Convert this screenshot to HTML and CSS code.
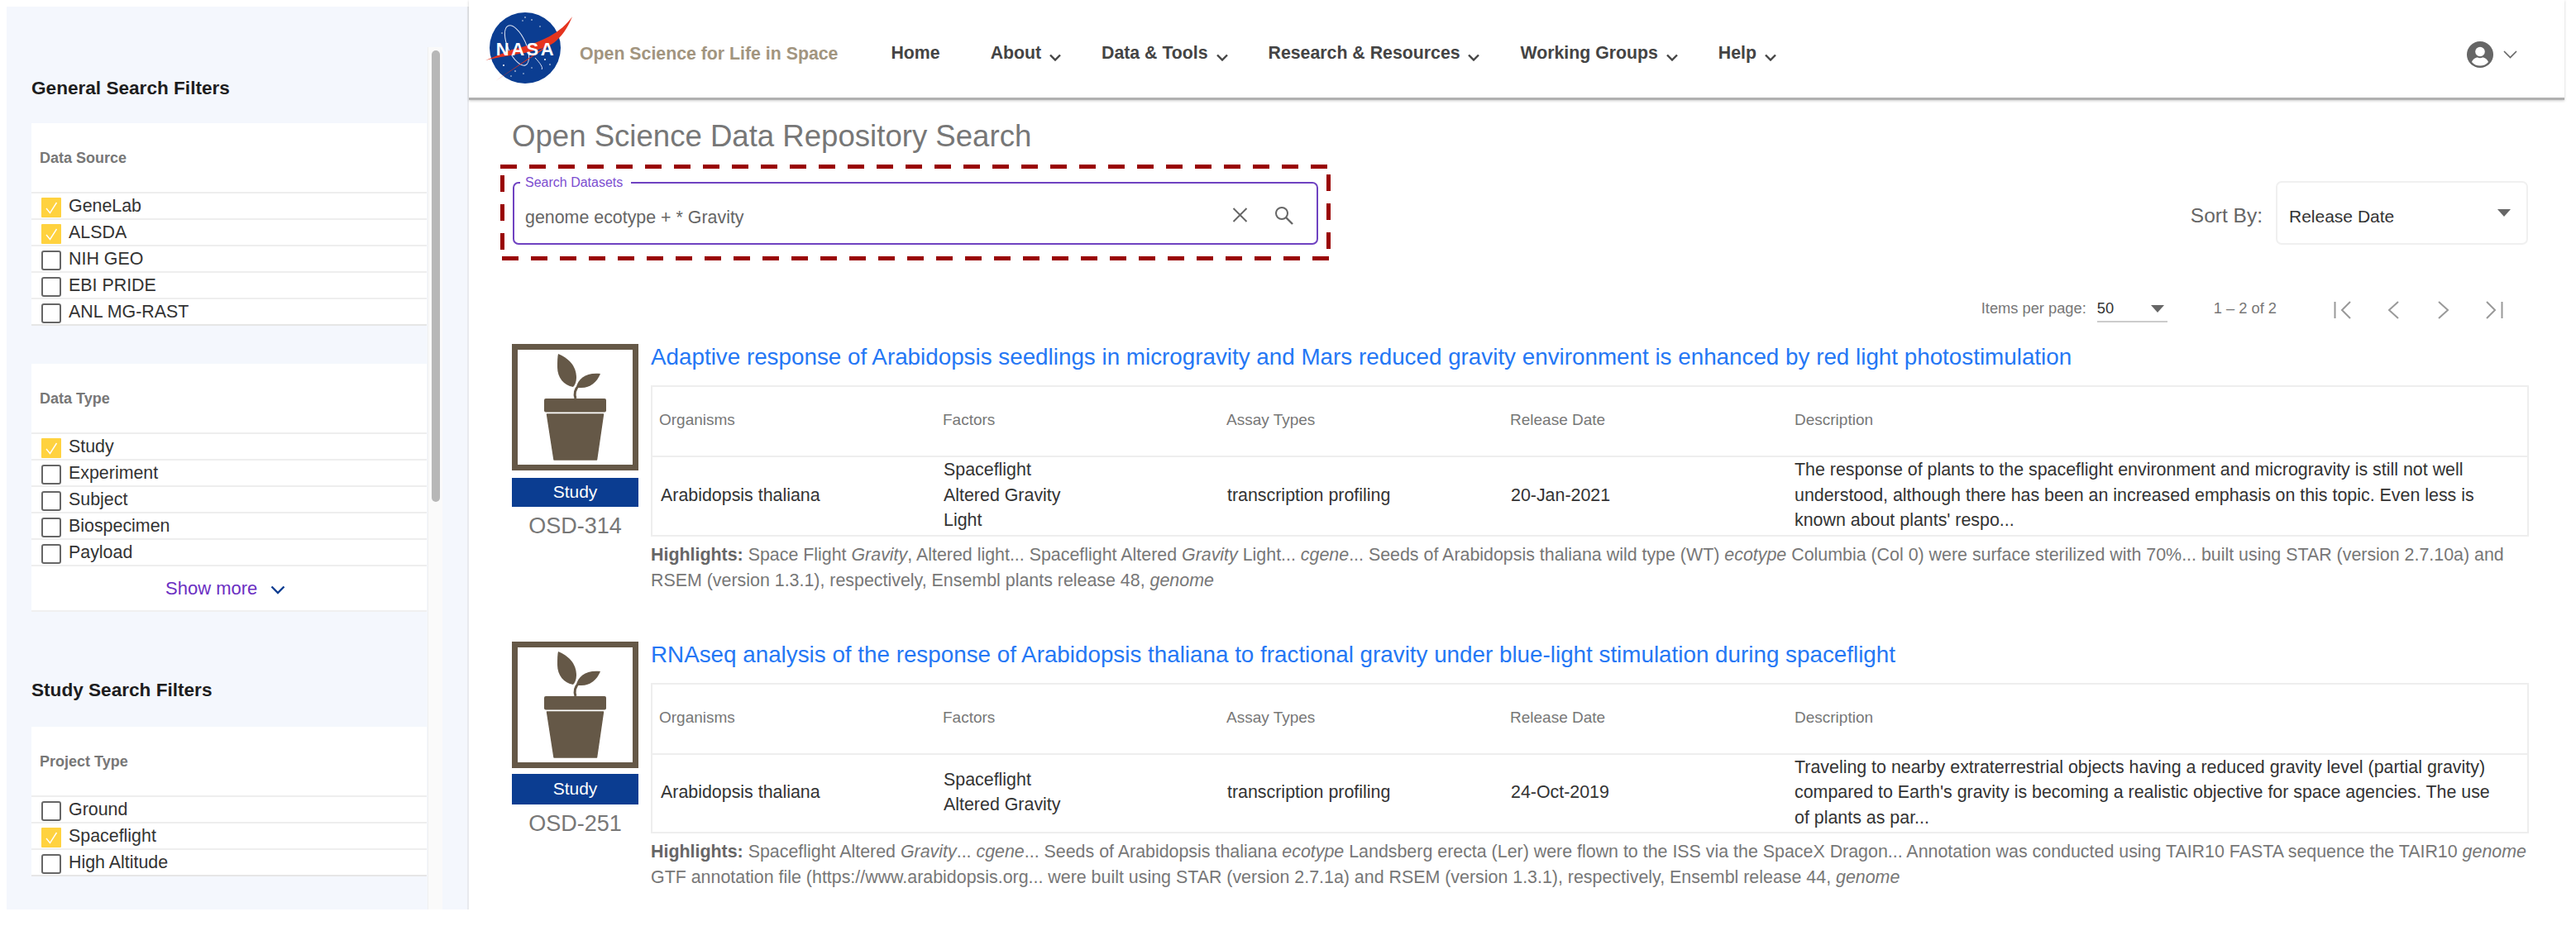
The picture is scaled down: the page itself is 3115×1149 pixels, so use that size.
FILE: index.html
```html
<!DOCTYPE html>
<html lang="en">
<head>
    <meta charset="UTF-8">
    <title>Open Science Data Repository Search</title>
    <link rel="stylesheet" href="styles.css">
</head>
<body>
    <svg class="defs" width="0" height="0">
        <symbol id="plant" viewBox="0 0 153 153">
            <rect x="3.5" y="3.5" width="146" height="146" fill="#fff" stroke="#655847" stroke-width="7"/>
            <rect x="39" y="66" width="75" height="16.5" rx="2" fill="#655847"/>
            <path d="M42.5 85H110.5L102.5 140H51Z" fill="#655847" stroke="#655847" stroke-linejoin="round" stroke-width="1.5"/>
            <path d="M56 12C68 17 78 26 78 41C78 46 76 50 74 52C63 50 55 41 55 28C55 21 55 16 56 12Z" fill="#655847"/>
            <path d="M107 36C103 46 95 53 84 53C82 53 80 53 78 52C80 42 90 34 107 36Z" fill="#655847"/>
            <path d="M77 66C75 60 76 55 81 50" fill="none" stroke="#655847" stroke-width="3"/>
        </symbol>
        <symbol id="tick" viewBox="0 0 24 24">
            <path d="M6 13L10.5 18.5L18.5 6" fill="none" stroke="#fff" stroke-width="1.4"/>
        </symbol>
        <symbol id="caret" viewBox="0 0 14 9">
            <path d="M1 1.5L7 7.5L13 1.5" fill="none" stroke="#444" stroke-width="2.4"/>
        </symbol>
    </svg>

    <!-- Filters -->
    <aside class="sidebar">
        <div class="filters">
            <h3 class="filter-title">General Search Filters</h3>
            <section class="filter-card">
                <h4>Data Source</h4>
                <div class="row"><span class="box on"><svg><use href="#tick"/></svg></span>GeneLab</div>
                <div class="row"><span class="box on"><svg><use href="#tick"/></svg></span>ALSDA</div>
                <div class="row"><span class="box"></span>NIH GEO</div>
                <div class="row"><span class="box"></span>EBI PRIDE</div>
                <div class="row"><span class="box"></span>ANL MG-RAST</div>
            </section>
            <section class="filter-card second">
                <h4>Data Type</h4>
                <div class="row"><span class="box on"><svg><use href="#tick"/></svg></span>Study</div>
                <div class="row"><span class="box"></span>Experiment</div>
                <div class="row"><span class="box"></span>Subject</div>
                <div class="row"><span class="box"></span>Biospecimen</div>
                <div class="row"><span class="box"></span>Payload</div>
                <div class="show-more">Show more
                    <svg width="18" height="11" viewBox="0 0 18 11"><path d="M1.5 1.5L9 9L16.5 1.5" fill="none" stroke="#0b3d91" stroke-width="2.4"/></svg>
                </div>
            </section>
            <h3 class="filter-title study">Study Search Filters</h3>
            <section class="filter-card">
                <h4>Project Type</h4>
                <div class="row"><span class="box"></span>Ground</div>
                <div class="row"><span class="box on"><svg><use href="#tick"/></svg></span>Spaceflight</div>
                <div class="row"><span class="box"></span>High Altitude</div>
            </section>
        </div>
        <div class="scroll-track"><div class="scroll-thumb"></div></div>
    </aside>

    <main class="main">
        <!-- Top navigation -->
        <header class="topbar">
            <svg class="nasa" width="110" height="95" viewBox="0 0 110 95">
                <circle cx="50" cy="48" r="43" fill="#0b3d91"/>
                <ellipse cx="40" cy="45" rx="11" ry="26" transform="rotate(-24 40 45)" fill="none" stroke="#dfe6f5" stroke-width="1"/>
                <path d="M62 60C68 66 72 72 70 74" fill="none" stroke="#dfe6f5" stroke-width="1"/>
                <g fill="#fff">
                    <circle cx="50" cy="11" r=".8"/><circle cx="58" cy="14" r=".8"/><circle cx="47" cy="15" r=".7"/>
                    <circle cx="22" cy="30" r=".7"/><circle cx="68" cy="22" r=".7"/><circle cx="24" cy="69" r="1"/>
                    <circle cx="38" cy="76" r=".8"/><circle cx="48" cy="79" r=".7"/><circle cx="74" cy="62" r="1"/>
                    <circle cx="80" cy="68" r=".8"/><circle cx="58" cy="72" r=".7"/><circle cx="33" cy="82" r=".7"/>
                </g>
                <path d="M107 10C94 29 70 42 34 50L2 63C34 55 72 54 88 39C97 31 103 20 107 10Z" fill="#e5341f"/>
                <path d="M84 40L14 88L78 46Z" fill="#e5341f"/>
                <text class="nasa-word" x="51" y="57" text-anchor="middle">NASA</text>
            </svg>
            <span class="tagline">Open Science for Life in Space</span>
            <nav class="nav">
                <a class="home">Home</a>
                <a>About <svg class="caret"><use href="#caret"/></svg></a>
                <a>Data &amp; Tools <svg class="caret"><use href="#caret"/></svg></a>
                <a>Research &amp; Resources <svg class="caret"><use href="#caret"/></svg></a>
                <a>Working Groups <svg class="caret"><use href="#caret"/></svg></a>
                <a>Help <svg class="caret"><use href="#caret"/></svg></a>
            </nav>
            <div class="user">
                <svg width="32" height="32" viewBox="0 0 32 32">
                    <circle cx="16" cy="16" r="16" fill="#666"/>
                    <circle cx="16" cy="12.5" r="5.8" fill="#fff"/>
                    <path d="M6 25C7.5 21 11 19.5 13 19.5C15 20.5 17 20.5 19 19.5C21 19.5 24.5 21 26 25C23.5 28 20 29.5 16 29.5C12 29.5 8.500 28 6 25Z" fill="#fff"/>
                </svg>
                <svg width="17" height="10" viewBox="0 0 17 10"><path d="M1 1L8.500 8.500L16 1" fill="none" stroke="#666" stroke-width="1.6"/></svg>
            </div>
        </header>

        <div class="content">
            <h1 class="page-title">Open Science Data Repository Search</h1>

            <div class="toolbar">
                <div class="highlight">
                    <div class="search-field">
                        <span class="search-label">Search Datasets</span>
                        <span class="search-text">genome ecotype + * Gravity</span>
                        <div class="search-icons">
                            <svg width="19" height="18" viewBox="0 0 19 18"><path d="M1.500 1L17.500 17M17.500 1L1.500 17" fill="none" stroke="#666" stroke-width="2"/></svg>
                            <svg width="23" height="23" viewBox="0 0 23 23"><circle cx="9" cy="9" r="7" fill="none" stroke="#666" stroke-width="2"/><path d="M14 14L22 22" stroke="#666" stroke-width="2.400"/></svg>
                        </div>
                    </div>
                </div>
                <div class="sort">
                    <span class="sort-label">Sort By:</span>
                    <div class="sort-select">
                        <span>Release Date</span>
                        <i class="arrow"></i>
                    </div>
                </div>
            </div>

            <div class="paginator">
                <span class="items-label">Items per page:</span>
                <div class="page-size"><span>50</span><i class="arrow small"></i></div>
                <span class="range">1 – 2 of 2</span>
                <div class="page-buttons">
                    <svg width="22" height="22" viewBox="0 0 22 22"><path d="M1.500 1V21M20 1L10 11L20 21" fill="none" stroke="#999" stroke-width="2"/></svg>
                    <svg width="22" height="22" viewBox="0 0 22 22"><path d="M17 1L6 11L17 21" fill="none" stroke="#999" stroke-width="2"/></svg>
                    <svg width="22" height="22" viewBox="0 0 22 22"><path d="M5 1L16 11L5 21" fill="none" stroke="#999" stroke-width="2"/></svg>
                    <svg width="22" height="22" viewBox="0 0 22 22"><path d="M2 1L12 11L2 21M20.500 1V21" fill="none" stroke="#999" stroke-width="2"/></svg>
                </div>
            </div>

            <!-- Results -->
            <article class="result">
                <div class="result-side">
                    <svg class="plant"><use href="#plant"/></svg>
                    <div class="badge">Study</div>
                    <div class="accession">OSD-314</div>
                </div>
                <div class="result-body">
                    <a class="result-title">Adaptive response of Arabidopsis seedlings in microgravity and Mars reduced gravity environment is enhanced by red light photostimulation</a>
                    <table class="meta">
                        <tr><th>Organisms</th><th>Factors</th><th>Assay Types</th><th>Release Date</th><th>Description</th></tr>
                        <tr>
                            <td>Arabidopsis thaliana</td>
                            <td>Spaceflight<br>Altered Gravity<br>Light</td>
                            <td>transcription profiling</td>
                            <td>20-Jan-2021</td>
                            <td>The response of plants to the spaceflight environment and microgravity is still not well understood, although there has been an increased emphasis on this topic. Even less is known about plants' respo...</td>
                        </tr>
                    </table>
                    <p class="highlights"><strong>Highlights:</strong> Space Flight <em>Gravity</em>, Altered light... Spaceflight Altered <em>Gravity</em> Light... <em>cgene</em>... Seeds of Arabidopsis thaliana wild type (WT) <em>ecotype</em> Columbia (Col 0) were surface sterilized with 70%... built using STAR (version 2.7.10a) and RSEM (version 1.3.1), respectively, Ensembl plants release 48, <em>genome</em></p>
                </div>
            </article>

            <article class="result">
                <div class="result-side">
                    <svg class="plant"><use href="#plant"/></svg>
                    <div class="badge tall">Study</div>
                    <div class="accession">OSD-251</div>
                </div>
                <div class="result-body">
                    <a class="result-title">RNAseq analysis of the response of Arabidopsis thaliana to fractional gravity under blue-light stimulation during spaceflight</a>
                    <table class="meta">
                        <tr><th>Organisms</th><th>Factors</th><th>Assay Types</th><th>Release Date</th><th>Description</th></tr>
                        <tr>
                            <td>Arabidopsis thaliana</td>
                            <td>Spaceflight<br>Altered Gravity</td>
                            <td>transcription profiling</td>
                            <td>24-Oct-2019</td>
                            <td>Traveling to nearby extraterrestrial objects having a reduced gravity level (partial gravity) compared to Earth's gravity is becoming a realistic objective for space agencies. The use of plants as par...</td>
                        </tr>
                    </table>
                    <p class="highlights"><strong>Highlights:</strong> Spaceflight Altered <em>Gravity</em>... <em>cgene</em>... Seeds of Arabidopsis thaliana <em>ecotype</em> Landsberg erecta (Ler) were flown to the ISS via the SpaceX Dragon... Annotation was conducted using TAIR10 FASTA sequence the TAIR10 <em>genome</em> GTF annotation file (https://www.arabidopsis.org... were built using STAR (version 2.7.1a) and RSEM (version 1.3.1), respectively, Ensembl release 44, <em>genome</em></p>
                </div>
            </article>
        </div>
    </main>
</body>
</html>
```

FILE: styles.css
```css
/* General Page Styling */
* {
    box-sizing: border-box;
}

body {
    font-family: "Liberation Sans", Arial, sans-serif;
    margin: 0;
    padding-left: 8px;
    display: flex;
    align-items: flex-start;
    width: 3115px;
    height: 1149px;
    overflow: hidden;
    background: #fff;
    color: #333;
}

.defs {
    position: absolute;
}

/* Sidebar */
.sidebar {
    display: flex;
    flex: none;
    width: 559px;
    height: 1092px;
    margin-top: 8px;
    background: #f4f7fd;
    border-right: 2px solid #e8eaee;
}

.filters {
    width: 509px;
    padding: 87px 1px 0 30px;
}

.filter-title {
    margin: 0 0 30px;
    font-size: 22.6px;
    line-height: 24px;
    font-weight: bold;
    color: #1d1d1d;
}

.filter-title.study {
    margin-top: 83px;
    margin-bottom: 32px;
}

.filter-card {
    background: #fff;
    border-bottom: 2px solid #e6e6e6;
}

.filter-card.second {
    margin-top: 46px;
    border-bottom-color: #f0f0f0;
}

.filter-card h4 {
    margin: 0;
    height: 83px;
    padding: 30px 0 0 10px;
    font-size: 18px;
    line-height: 24px;
    font-weight: bold;
    color: #777;
}

.row {
    display: flex;
    align-items: center;
    gap: 9px;
    height: 32px;
    padding-left: 12px;
    border-top: 2px solid #eee;
    font-size: 21.4px;
    color: #333;
}

.box {
    flex: none;
    width: 24px;
    height: 24px;
    margin-top: 4px;
    background: #fff;
    border: 2px solid #666;
    border-radius: 3px;
}

.box.on {
    background: #ffd23f;
    border: none;
    border-radius: 1px;
}

.box svg {
    display: block;
    width: 24px;
    height: 24px;
}

.show-more {
    display: flex;
    align-items: center;
    gap: 16px;
    height: 55px;
    padding-left: 162px;
    border-top: 2px solid #eee;
    font-size: 22px;
    color: #6b2fc2;
}

.show-more svg {
    margin-top: 4px;
}

.scroll-track {
    flex: none;
    width: 18px;
    margin-top: 49px;
    padding: 4px 4px 0;
    background: #fafafa;
    border-left: 1px solid #f0f0f0;
}

.scroll-thumb {
    width: 10px;
    height: 546px;
    background: #b7b7b7;
    border-radius: 5px;
}

/* Main */
.main {
    flex: none;
    width: 2534px;
}

.topbar {
    display: flex;
    align-items: flex-start;
    height: 121px;
    padding: 10px 57px 0 18px;
    border-bottom: 3px solid #b0b0b0;
    box-shadow: 0 1px 3px rgba(0, 0, 0, 0.2);
}

.nasa {
    flex: none;
}

.nasa-word {
    font-family: "Liberation Sans", Arial, sans-serif;
    font-size: 22px;
    font-weight: bold;
    fill: #fff;
    letter-spacing: 2.5px;
}

.tagline {
    margin: 42px 0 0 6px;
    font-size: 21.3px;
    line-height: 26px;
    font-weight: bold;
    color: #a2957f;
}

.nav {
    display: flex;
    gap: 49px;
    margin: 42px 0 0 64px;
}

.nav a {
    font-size: 21.3px;
    line-height: 24px;
    font-weight: bold;
    color: #444;
    white-space: nowrap;
}

.nav .home {
    margin-right: 12px;
}

.caret {
    width: 14px;
    height: 9px;
    margin-left: 4px;
    vertical-align: -3px;
}

.user {
    display: flex;
    align-items: center;
    gap: 12px;
    margin: 40px 0 0 auto;
}

/* Search area */
.content {
    padding: 0 43px 0 38px;
}

.page-title {
    margin: 22px 0 12px 14px;
    font-size: 36.6px;
    line-height: 44px;
    font-weight: normal;
    color: #777;
}

.toolbar {
    display: flex;
    align-items: center;
    justify-content: space-between;
}

.highlight {
    width: 1004px;
    height: 116px;
    padding: 21px 15px 19px;
    background:
        repeating-linear-gradient(90deg, #900 0 20px, transparent 20px 35px) 0 0 / 100% 5px no-repeat,
        repeating-linear-gradient(90deg, #900 0 20px, transparent 20px 35px) 2px 100% / 100% 5px no-repeat,
        repeating-linear-gradient(180deg, #900 0 20px, transparent 20px 35px) 0 13px / 5px 100% no-repeat,
        repeating-linear-gradient(180deg, #900 0 20px, transparent 20px 35px) 100% 12px / 5px 100% no-repeat;
}

.search-field {
    position: relative;
    display: flex;
    align-items: center;
    justify-content: space-between;
    height: 76px;
    padding: 10px 28px 0 13px;
    border: 2px solid #6f42c1;
    border-radius: 7px;
}

.search-label {
    position: absolute;
    top: -10px;
    left: 7px;
    padding: 0 10px 0 6px;
    background: #fff;
    font-size: 16px;
    line-height: 18px;
    color: #7c4dd0;
}

.search-text {
    font-size: 21.4px;
    color: #666;
}

.search-icons {
    display: flex;
    align-items: center;
    gap: 32px;
    margin-top: -6px;
}

.sort {
    display: flex;
    align-items: center;
    gap: 16px;
    margin-right: 1px;
}

.sort-label {
    padding-top: 8px;
    font-size: 24.5px;
    color: #666;
}

.sort-select {
    display: flex;
    align-items: center;
    justify-content: space-between;
    width: 305px;
    height: 77px;
    padding: 10px 19px 0 14px;
    border: 2px solid #f0f0f0;
    border-radius: 7px;
    font-size: 21px;
    color: #333;
}

.arrow {
    width: 0;
    height: 0;
    margin-top: -10px;
    border-left: 8px solid transparent;
    border-right: 8px solid transparent;
    border-top: 9px solid #666;
}

.arrow.small {
    margin-top: 0;
}

/* Paginator */
.paginator {
    display: flex;
    align-items: flex-start;
    justify-content: flex-end;
    margin-top: 46px;
    padding-right: 31px;
    font-size: 18.3px;
    line-height: 24px;
    color: #777;
}

.page-size {
    display: flex;
    align-items: center;
    justify-content: space-between;
    width: 85px;
    height: 29px;
    margin-left: 13px;
    padding: 0 4px 3px 0;
    border-bottom: 2px solid #ccc;
    color: #333;
}

.range {
    margin-left: 56px;
}

.page-buttons {
    display: flex;
    gap: 39px;
    margin: 3px 0 0 69px;
}

/* Results */
.result {
    display: flex;
    gap: 15px;
    margin: 26px 0 58px 14px;
}

.result-side {
    flex: none;
    width: 153px;
    text-align: center;
}

.plant {
    display: block;
    width: 153px;
    height: 153px;
}

.badge {
    height: 35px;
    margin-top: 9px;
    background: #0b3d91;
    font-size: 21px;
    line-height: 33px;
    color: #fff;
}

.badge.tall {
    height: 37px;
    margin-top: 7px;
    line-height: 35px;
}

.accession {
    margin-top: 8px;
    font-size: 27px;
    line-height: 30px;
    color: #777;
}

.result-body {
    width: 2271px;
}

.result-title {
    display: block;
    font-size: 27.8px;
    line-height: 32px;
    color: #2477f5;
    white-space: nowrap;
}

.meta {
    width: 100%;
    margin-top: 18px;
    border: 2px solid #eee;
    border-collapse: collapse;
    table-layout: fixed;
}

.meta th {
    width: 343px;
    height: 85px;
    padding: 0 0 3px 8px;
    border-bottom: 2px solid #eee;
    font-size: 19px;
    font-weight: normal;
    text-align: left;
    color: #777;
}

.meta th:nth-child(2),
.meta th:nth-child(3),
.meta th:nth-child(4) {
    padding-left: 9px;
}

.meta th:last-child {
    width: auto;
    padding-left: 10px;
}

.meta td {
    height: 92px;
    padding: 0 30px 2px 10px;
    font-size: 21.4px;
    line-height: 30.5px;
    color: #333;
}

.highlights {
    margin: 7px 0 0;
    font-size: 21.4px;
    line-height: 31px;
    color: #777;
}

.highlights strong {
    color: #666;
}
```
